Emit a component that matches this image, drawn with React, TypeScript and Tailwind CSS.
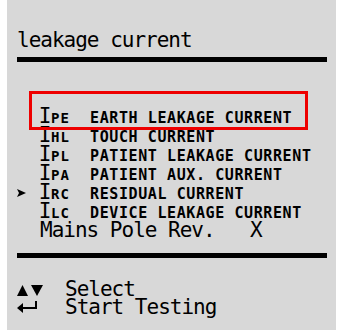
import React from 'react';

const mono = { fontFamily: '"DejaVu Sans Mono", "Liberation Mono", monospace' };

type Row = { sub: string; label: string; active?: boolean };

const rows: Row[] = [
  { sub: 'PE', label: 'EARTH LEAKAGE CURRENT' },
  { sub: 'HL', label: 'TOUCH CURRENT' },
  { sub: 'PL', label: 'PATIENT LEAKAGE CURRENT' },
  { sub: 'PA', label: 'PATIENT AUX. CURRENT' },
  { sub: 'RC', label: 'RESIDUAL CURRENT', active: true },
  { sub: 'LC', label: 'DEVICE LEAKAGE CURRENT' },
];

function Pointer() {
  return (
    <svg width="9" height="8" viewBox="0 0 9 8" className="block">
      <path d="M0 0 L9 4 L0 8 L2 4 Z" fill="#000" />
    </svg>
  );
}

function Arrows() {
  return (
    <svg width="27" height="13" viewBox="0 0 27 13" className="block">
      <path d="M0 12 L5.5 1 L11 12 Z" fill="#000" />
      <path d="M14 1 L26 1 L20 12 Z" fill="#000" />
    </svg>
  );
}

function EnterKey() {
  return (
    <svg width="21" height="12" viewBox="0 0 21 12" className="block">
      <path d="M19 0 L19 7 L3 7" stroke="#000" strokeWidth="2" fill="none" />
      <path d="M0 7 L6 2 L6 12 Z" fill="#000" />
    </svg>
  );
}

export default function App() {
  return (
    <div className="w-[341px] h-[336px] bg-white">
      <div className="relative ml-[7px] w-[329px] h-[330px] bg-[#d8d8d8] pl-[10px] pr-[9px] text-black" style={mono}>
        {/* header */}
        <div className="pt-[28px] text-[21px] leading-[24px] tracking-[-1px]">leakage current</div>
        <div className="mt-[5px] h-[5px] bg-black" />

        {/* menu list */}
        <div className="mt-[45px]">
          {rows.map((r) => (
            <div key={r.sub} className="h-[19px] flex items-baseline">
              <div className="w-[23px] flex items-center self-center">{r.active && <Pointer />}</div>
              <div className="w-[10px] flex justify-center">
                <span className="text-[21px] leading-[19px]">I</span>
              </div>
              <span className="ml-[1px] w-[39px] font-bold text-[14px] leading-[19px] tracking-[1px]">{r.sub}</span>
              <span className="font-bold text-[15px] leading-[19px] tracking-[0.6px]">{r.label}</span>
            </div>
          ))}
          <div className="h-[19px] flex items-baseline pl-[23px] text-[21px] leading-[19px] tracking-[-1px]">
            <span className="w-[210px]">Mains Pole Rev.</span>
            <span>X</span>
          </div>
        </div>

        <div className="mt-[13px] h-[5px] bg-black" />

        {/* footer hints */}
        <div className="mt-[22px] text-[21px] leading-[18px] tracking-[-1px]">
          <div className="flex items-baseline h-[18px]">
            <div className="w-[48px] self-end pb-[1px]"><Arrows /></div>
            <span>Select</span>
          </div>
          <div className="flex items-baseline h-[18px]">
            <div className="w-[48px] self-center"><EnterKey /></div>
            <span>Start Testing</span>
          </div>
        </div>

        {/* highlight frame around selected entry */}
        <div className="absolute left-[22px] top-[91px] w-[279px] h-[39px] border-[3px] border-[#ee0000]" />
      </div>
    </div>
  );
}
